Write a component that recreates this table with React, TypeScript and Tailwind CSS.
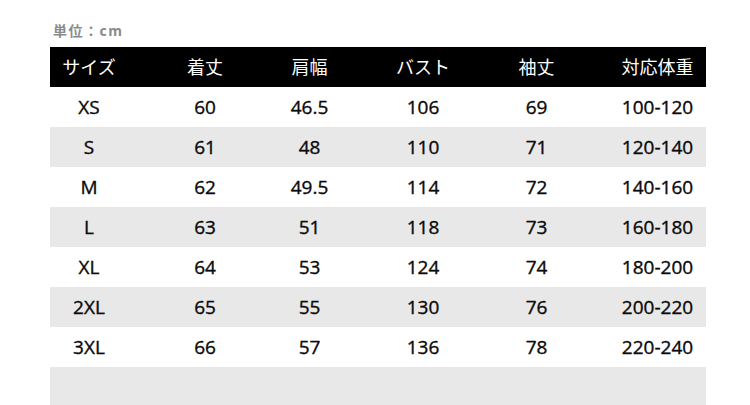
import React from "react";

const headers = ["サイズ", "着丈", "肩幅", "バスト", "袖丈", "対応体重"];
const rows = [
  ["XS", "60", "46.5", "106", "69", "100-120"],
  ["S", "61", "48", "110", "71", "120-140"],
  ["M", "62", "49.5", "114", "72", "140-160"],
  ["L", "63", "51", "118", "73", "160-180"],
  ["XL", "64", "53", "124", "74", "180-200"],
  ["2XL", "65", "55", "130", "76", "200-220"],
  ["3XL", "66", "57", "136", "78", "220-240"],
];

const colPad = ["pr-[19px]", "pl-[6px]", "pr-[4px]", "", "pr-[4px]", "pl-[12px]"];

function Row({ cells, className }: { cells: string[]; className: string }) {
  return (
    <div className={`grid grid-cols-[97px_110px_109px_114px_117px_109px] h-[40px] items-center ${className}`}>
      {cells.map((c, i) => (
        <div key={i} className={`text-center ${colPad[i]}`}>
          {c}
        </div>
      ))}
    </div>
  );
}

export default function App() {
  return (
    <div
      className="w-[750px] h-[405px] overflow-hidden bg-white"
      style={{ fontFamily: '"Open Sans", "Noto Sans CJK JP", sans-serif' }}
    >
      <div className="pl-[53px] pt-[21px] h-[47px] text-[14px] font-bold text-[#8a8a8a] tracking-[1.5px] leading-[20px]">
        単位：cm
      </div>
      <div className="ml-[50px] w-[656px] text-[19px]">
        <Row cells={headers} className="bg-black text-white text-[18px]" />
        {rows.map((r, i) => (
          <Row
            key={i}
            cells={r}
            className={`${i % 2 === 1 ? "bg-[#e8e8e8]" : "bg-white"} text-[#0a0a0a] [-webkit-text-stroke:0.35px_#0a0a0a]`}
          />
        ))}
        <div className="h-[40px] bg-[#e8e8e8]" />
      </div>
    </div>
  );
}
